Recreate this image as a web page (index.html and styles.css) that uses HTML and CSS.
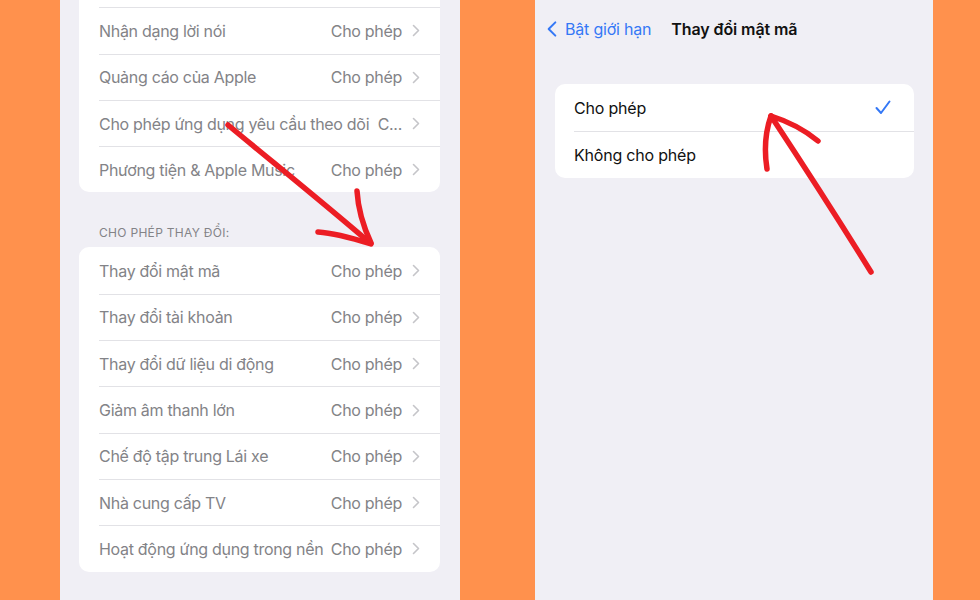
FILE: index.html
```html
<!DOCTYPE html>
<html lang="vi">
<head>
  <meta charset="UTF-8" />
  <meta name="viewport" content="width=device-width, initial-scale=1.0" />
  <title>Thay đổi mật mã</title>
  <link rel="stylesheet" href="styles.css">
</head>

<body>
  <div class="stage">

    <!-- màn hình trái: danh sách giới hạn -->
    <section class="phone phone-left">
      <div class="group group-top">
        <div class="row"><span class="label">&nbsp;</span></div>
        <div class="row">
          <span class="label">Nhận dạng lời nói</span>
          <span class="value">Cho phép</span>
          <svg class="chev" viewBox="0 0 8 13"><path d="M1.5 1.5 L6.5 6.5 L1.5 11.5" /></svg>
        </div>
        <div class="row">
          <span class="label">Quảng cáo của Apple</span>
          <span class="value">Cho phép</span>
          <svg class="chev" viewBox="0 0 8 13"><path d="M1.5 1.5 L6.5 6.5 L1.5 11.5" /></svg>
        </div>
        <div class="row">
          <span class="label">Cho phép ứng dụng yêu cầu theo dõi</span>
          <span class="value">C...</span>
          <svg class="chev" viewBox="0 0 8 13"><path d="M1.5 1.5 L6.5 6.5 L1.5 11.5" /></svg>
        </div>
        <div class="row">
          <span class="label">Phương tiện &amp; Apple Music</span>
          <span class="value">Cho phép</span>
          <svg class="chev" viewBox="0 0 8 13"><path d="M1.5 1.5 L6.5 6.5 L1.5 11.5" /></svg>
        </div>
      </div>

      <h3 class="group-title">Cho phép thay đổi:</h3>

      <div class="group">
        <div class="row">
          <span class="label">Thay đổi mật mã</span>
          <span class="value">Cho phép</span>
          <svg class="chev" viewBox="0 0 8 13"><path d="M1.5 1.5 L6.5 6.5 L1.5 11.5" /></svg>
        </div>
        <div class="row">
          <span class="label">Thay đổi tài khoản</span>
          <span class="value">Cho phép</span>
          <svg class="chev" viewBox="0 0 8 13"><path d="M1.5 1.5 L6.5 6.5 L1.5 11.5" /></svg>
        </div>
        <div class="row">
          <span class="label">Thay đổi dữ liệu di động</span>
          <span class="value">Cho phép</span>
          <svg class="chev" viewBox="0 0 8 13"><path d="M1.5 1.5 L6.5 6.5 L1.5 11.5" /></svg>
        </div>
        <div class="row">
          <span class="label">Giảm âm thanh lớn</span>
          <span class="value">Cho phép</span>
          <svg class="chev" viewBox="0 0 8 13"><path d="M1.5 1.5 L6.5 6.5 L1.5 11.5" /></svg>
        </div>
        <div class="row">
          <span class="label">Chế độ tập trung Lái xe</span>
          <span class="value">Cho phép</span>
          <svg class="chev" viewBox="0 0 8 13"><path d="M1.5 1.5 L6.5 6.5 L1.5 11.5" /></svg>
        </div>
        <div class="row">
          <span class="label">Nhà cung cấp TV</span>
          <span class="value">Cho phép</span>
          <svg class="chev" viewBox="0 0 8 13"><path d="M1.5 1.5 L6.5 6.5 L1.5 11.5" /></svg>
        </div>
        <div class="row">
          <span class="label">Hoạt động ứng dụng trong nền</span>
          <span class="value">Cho phép</span>
          <svg class="chev" viewBox="0 0 8 13"><path d="M1.5 1.5 L6.5 6.5 L1.5 11.5" /></svg>
        </div>
      </div>
    </section>

    <!-- màn hình phải: chọn giá trị -->
    <section class="phone phone-right">
      <header class="navbar">
        <a class="back" href="#">
          <svg class="back-chev" viewBox="0 0 12 20"><path d="M10 2 L2 10 L10 18" /></svg>
          Bật giới hạn
        </a>
        <h2 class="nav-title">Thay đổi mật mã</h2>
      </header>

      <div class="group choices">
        <div class="row">
          <span class="label">Cho phép</span>
          <svg class="check" viewBox="0 0 16 15"><path d="M1.5 8 L6 13 L14.5 1.5" /></svg>
        </div>
        <div class="row">
          <span class="label">Không cho phép</span>
        </div>
      </div>
    </section>

    <!-- nét vẽ tay màu đỏ -->
    <svg class="marks" viewBox="0 0 980 600">
      <path d="M228 125 C 270 160, 320 200, 370 243" />
      <path d="M318 232 C 335 233, 352 238, 371 244" />
      <path d="M357 191 C 358 208, 364 228, 371 243" />
      <path d="M871 272 C 840 222, 800 160, 771 116" />
      <path d="M771 116 C 790 122, 806 131, 818 141" />
      <path d="M771 116 C 766 130, 764 150, 767 169" />
    </svg>
  </div>
</body>
</html>
```

FILE: styles.css
```css
:root {
  --orange: #ff914d;
  --screen-bg: #f0eff5;
  --card-bg: #fff;
  --dim-text: #838387;
  --line: #e2e2e6;
  --chev: #c5c5c9;
  --blue: #3478f6;
  --ink: #111;
  --pen: #ec1d24;
}

* {
  box-sizing: border-box;
}

body {
  margin: 0;
  background-color: var(--orange);
  font-family: Inter, "Noto Sans", Arial, sans-serif;
  overflow: hidden;
}

.stage {
  position: relative;
  display: flex;
  gap: 75px;
  height: 600px;
  padding-left: 60px;
}

.phone {
  width: 400px;
  height: 600px;
  background-color: var(--screen-bg);
  overflow: hidden;
}

.phone-left {
  padding: 0 20px 0 19px;
}

.phone-right {
  width: 398px;
  padding: 0 19px 0 20px;
}

.group {
  background-color: var(--card-bg);
  border-radius: 10px;
  overflow: hidden;
}

.group-top {
  margin-top: -39px;
}

.row {
  display: flex;
  align-items: center;
  height: 46.3px;
  margin-left: 20px;
  padding-right: 20px;
  font-size: 16px;
  letter-spacing: -0.3px;
  color: var(--dim-text);
  white-space: nowrap;
}

.row + .row {
  border-top: 1px solid var(--line);
}

.label {
  flex: 1;
  min-width: 0;
  overflow: hidden;
}

.value {
  flex-shrink: 0;
  margin-left: 3px;
}

.chev {
  flex-shrink: 0;
  width: 8px;
  height: 13px;
  margin-left: 10px;
  fill: none;
  stroke: var(--chev);
  stroke-width: 1.6;
  stroke-linecap: round;
  stroke-linejoin: round;
}

.group-title {
  margin: 33px 0 7px 20px;
  font-size: 12px;
  font-weight: 400;
  letter-spacing: 0.3px;
  text-transform: uppercase;
  color: var(--dim-text);
}

/* màn hình phải */
.navbar {
  display: flex;
  align-items: center;
  height: 58px;
}

.back {
  display: flex;
  align-items: center;
  gap: 8px;
  color: var(--blue);
  font-size: 16px;
  letter-spacing: -0.2px;
  text-decoration: none;
  margin-left: -8px;
}

.back-chev {
  width: 10px;
  height: 18px;
  fill: none;
  stroke: var(--blue);
  stroke-width: 2.4;
  stroke-linecap: round;
  stroke-linejoin: round;
}

.nav-title {
  margin: 0 0 0 20px;
  font-size: 16px;
  font-weight: 600;
  letter-spacing: -0.1px;
  color: var(--ink);
}

.choices {
  margin-top: 26px;
}

.choices .row {
  height: 47px;
  margin-left: 19px;
  letter-spacing: -0.2px;
  color: var(--ink);
}

.check {
  width: 16px;
  height: 15px;
  margin-right: 3px;
  fill: none;
  stroke: var(--blue);
  stroke-width: 2;
  stroke-linecap: round;
  stroke-linejoin: round;
}

/* nét bút đỏ phủ lên hai màn hình */
.marks {
  position: absolute;
  left: 0;
  top: 0;
  width: 980px;
  height: 600px;
  pointer-events: none;
}

.marks path {
  fill: none;
  stroke: var(--pen);
  stroke-width: 5.5;
  stroke-linecap: round;
  stroke-linejoin: round;
}
```
